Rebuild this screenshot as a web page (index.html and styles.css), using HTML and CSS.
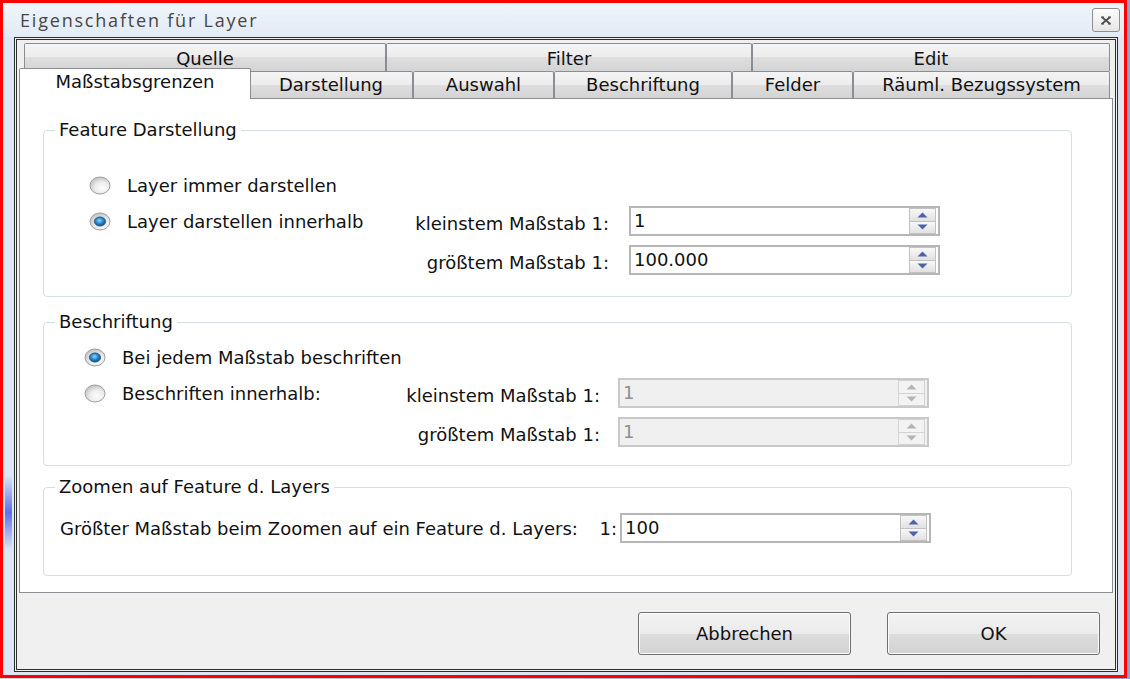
FILE: index.html
```html
<!DOCTYPE html>
<html lang="de">
<head>
<meta charset="utf-8">
<title>Eigenschaften für Layer</title>
<link rel="stylesheet" href="styles.css">
</head>
<body>
<svg class="defs" width="0" height="0" aria-hidden="true">
  <defs>
    <radialGradient id="rbFill" cx="0.6" cy="0.65" r="0.6">
      <stop offset="0" stop-color="#fdfdfd"/>
      <stop offset="0.6" stop-color="#ececec"/>
      <stop offset="1" stop-color="#c9c9c9"/>
    </radialGradient>
    <radialGradient id="rbDot" cx="0.45" cy="0.4" r="0.65">
      <stop offset="0" stop-color="#8fd6fb"/>
      <stop offset="0.45" stop-color="#2f8fd0"/>
      <stop offset="1" stop-color="#0f3f73"/>
    </radialGradient>
  </defs>
</svg>
<div class="window">
  <div class="titlebar">
    <span class="title">Eigenschaften für Layer</span>
    <button class="close" aria-label="Schließen">
      <svg width="12" height="9" viewBox="0 0 12 9"><path d="M2 1.2 L10 7.8 M10 1.2 L2 7.8" stroke="#505050" stroke-width="1.8" fill="none"/><path d="M1 1.2h3M8 1.2h3M1 7.8h3M8 7.8h3" stroke="#505050" stroke-width="1.2"/></svg>
    </button>
  </div>
  <div class="client">
    <div class="tabctl">
      <div class="tabrow back">
        <div class="tab w-quelle">Quelle</div>
        <div class="tab w-filter">Filter</div>
        <div class="tab w-edit">Edit</div>
      </div>
      <div class="tabrow front">
        <div class="tab active w-mass">Maßstabsgrenzen</div>
        <div class="tab w-dar">Darstellung</div>
        <div class="tab w-aus">Auswahl</div>
        <div class="tab w-bes">Beschriftung</div>
        <div class="tab w-fel">Felder</div>
        <div class="tab w-rau">Räuml. Bezugssystem</div>
      </div>
      <div class="panel">
        <fieldset class="group g1">
          <legend>Feature Darstellung</legend>
          <div class="grid grid1">
            <label class="radio span-all">
              <svg class="rb" width="22" height="19" viewBox="0 0 22 19"><ellipse cx="11" cy="9.5" rx="10" ry="8.5" fill="url(#rbFill)" stroke="#9d9d9d"/></svg>
              <span>Layer immer darstellen</span>
            </label>
            <label class="radio">
              <svg class="rb" width="22" height="19" viewBox="0 0 22 19"><ellipse cx="11" cy="9.5" rx="10" ry="8.5" fill="url(#rbFill)" stroke="#9d9d9d"/><ellipse cx="11" cy="9.5" rx="5.6" ry="4.6" fill="url(#rbDot)" stroke="#1d4f86" stroke-width="0.8"/></svg>
              <span>Layer darstellen innerhalb</span>
            </label>
            <span class="lbl">kleinstem Maßstab 1:</span>
            <div class="spin"><span class="val">1</span><span class="btns"><i><svg width="11" height="6" viewBox="0 0 11 6"><path d="M5.5 0.5 L10.5 5.5 H0.5Z"/></svg></i><i><svg width="11" height="6" viewBox="0 0 11 6"><path d="M0.5 0.5 H10.5 L5.5 5.5Z"/></svg></i></span></div>
            <span class="lbl c2">größtem Maßstab 1:</span>
            <div class="spin"><span class="val">100.000</span><span class="btns"><i><svg width="11" height="6" viewBox="0 0 11 6"><path d="M5.5 0.5 L10.5 5.5 H0.5Z"/></svg></i><i><svg width="11" height="6" viewBox="0 0 11 6"><path d="M0.5 0.5 H10.5 L5.5 5.5Z"/></svg></i></span></div>
          </div>
        </fieldset>

        <fieldset class="group g2">
          <legend>Beschriftung</legend>
          <div class="grid grid2">
            <label class="radio span-all">
              <svg class="rb" width="22" height="19" viewBox="0 0 22 19"><ellipse cx="11" cy="9.5" rx="10" ry="8.5" fill="url(#rbFill)" stroke="#9d9d9d"/><ellipse cx="11" cy="9.5" rx="5.6" ry="4.6" fill="url(#rbDot)" stroke="#1d4f86" stroke-width="0.8"/></svg>
              <span>Bei jedem Maßstab beschriften</span>
            </label>
            <label class="radio">
              <svg class="rb" width="22" height="19" viewBox="0 0 22 19"><ellipse cx="11" cy="9.5" rx="10" ry="8.5" fill="url(#rbFill)" stroke="#9d9d9d"/></svg>
              <span>Beschriften innerhalb:</span>
            </label>
            <span class="lbl">kleinstem Maßstab 1:</span>
            <div class="spin disabled"><span class="val">1</span><span class="btns"><i><svg width="11" height="6" viewBox="0 0 11 6"><path d="M5.5 0.5 L10.5 5.5 H0.5Z"/></svg></i><i><svg width="11" height="6" viewBox="0 0 11 6"><path d="M0.5 0.5 H10.5 L5.5 5.5Z"/></svg></i></span></div>
            <span class="lbl c2">größtem Maßstab 1:</span>
            <div class="spin disabled"><span class="val">1</span><span class="btns"><i><svg width="11" height="6" viewBox="0 0 11 6"><path d="M5.5 0.5 L10.5 5.5 H0.5Z"/></svg></i><i><svg width="11" height="6" viewBox="0 0 11 6"><path d="M0.5 0.5 H10.5 L5.5 5.5Z"/></svg></i></span></div>
          </div>
        </fieldset>

        <fieldset class="group g3">
          <legend>Zoomen auf Feature d. Layers</legend>
          <div class="grid grid3">
            <span class="lbl-left">Größter Maßstab beim Zoomen auf ein Feature d. Layers:</span>
            <span class="ratio">1:</span>
            <div class="spin"><span class="val">100</span><span class="btns"><i><svg width="11" height="6" viewBox="0 0 11 6"><path d="M5.5 0.5 L10.5 5.5 H0.5Z"/></svg></i><i><svg width="11" height="6" viewBox="0 0 11 6"><path d="M0.5 0.5 H10.5 L5.5 5.5Z"/></svg></i></span></div>
          </div>
        </fieldset>
      </div>
    </div>
    <div class="actions">
      <button class="btn">Abbrechen</button>
      <button class="btn">OK</button>
    </div>
  </div>
</div>
</body>
</html>
```

FILE: styles.css
```css
* { box-sizing: border-box; }
html, body { margin: 0; padding: 0; }
body {
  width: 1130px;
  height: 679px;
  overflow: hidden;
  background: linear-gradient(90deg, #c9d5e8, #8fa3d8);
  font-family: "DejaVu Sans", sans-serif;
  font-size: 18px;
  color: #111;
}
.defs { position: absolute; width: 0; height: 0; }

.window {
  width: 1127px;
  height: 678px;
  border: 3px solid #ff0000;
  background-color: #dde7f3;
  background-image: linear-gradient(to bottom, rgba(70, 90, 235, 0), rgba(70, 90, 235, 0.85) 50%, rgba(70, 90, 235, 0));
  background-repeat: no-repeat;
  background-position: 2px 472px;
  background-size: 7px 75px;
  display: flex;
  flex-direction: column;
}

.titlebar {
  height: 34px;
  flex: none;
  display: flex;
  justify-content: space-between;
  align-items: flex-start;
  padding-left: 17px;
  background: linear-gradient(to bottom, #f0f5fb, #e2eaf5);
}
.title {
  font-family: "Open Sans", "DejaVu Sans", sans-serif;
  font-size: 18px;
  letter-spacing: 1.8px;
  line-height: 34px;
  color: #464646;
}
.close {
  width: 28px;
  height: 24px;
  margin: 5px 4px 0 0;
  padding: 0;
  border: 1px solid #8e8e8e;
  border-radius: 3px;
  background: linear-gradient(to bottom, #fdfdfd, #e6e6e6);
  display: flex;
  align-items: center;
  justify-content: center;
}

.client {
  flex: 1;
  margin: 0 6px 3px 11px;
  border: 3px double #2e2e2e;
  background: #f0f0f0;
  display: flex;
  flex-direction: column;
}

.tabctl { padding-top: 3px; }
.tabrow { display: flex; }
.tabrow.back { height: 28px; margin-left: 7px; }
.tabrow.front { height: 27px; margin-left: 4px; position: relative; z-index: 1; }

.tab {
  flex: none;
  border: 1px solid #8b8d94;
  border-bottom: none;
  border-radius: 2px 2px 0 0;
  background: linear-gradient(to bottom, #f4f4f4, #ececec 50%, #dedede 50%, #d4d4d4);
  text-align: center;
  white-space: nowrap;
}
.back .tab { padding-top: 2px; line-height: 25px; }
.front .tab { line-height: 26px; }
.tab.active {
  position: relative;
  z-index: 2;
  height: 31px;
  margin: -3px -2px 0 -2px;
  background: #fff;
}

.w-quelle { width: 362px; }
.w-filter { width: 366px; }
.w-edit { width: 358px; }
.w-mass { width: 232px; }
.w-dar { width: 164px; }
.w-aus { width: 141px; }
.w-bes { width: 178px; }
.w-fel { width: 121px; }
.w-rau { width: 257px; }

.panel {
  height: 495px;
  margin: 0 2px;
  border: 1px solid #8b8d94;
  background: #fff;
  padding: 21px 0 0 23px;
}

.group {
  width: 1029px;
  margin: 0;
  padding: 0;
  border: 1px solid #d5dfe6;
  border-radius: 4px;
  min-width: 0;
}
.group legend {
  margin-left: 11px;
  padding: 0 4px;
  line-height: 20px;
  font-size: 18px;
}
.g2 { margin-top: 15px; }
.g3 { margin-top: 11px; }

.grid { display: grid; align-items: center; line-height: 21px; }
.grid1 {
  grid-template-columns: 300px 240px 311px;
  grid-template-rows: 24px 30px 30px;
  row-gap: 9px;
  padding: 33px 0 21px 45px;
}
.grid2 {
  grid-template-columns: 296px 238px 311px;
  grid-template-rows: 24px 30px 30px;
  row-gap: 9px;
  padding: 13px 0 18px 40px;
}
.grid3 {
  grid-template-columns: 520px 37px 314px;
  grid-template-rows: 30px;
  padding: 16px 0 32px 16px;
}
.grid3 .spin { margin-left: 3px; }

.span-all { grid-column: 1 / -1; }
.c2 { grid-column: 2; }

.radio { display: flex; align-items: center; gap: 16px; }
.rb { flex: none; display: block; }

.lbl { text-align: right; padding-right: 20px; padding-top: 4px; }
.grid2 .lbl { padding-right: 18px; }
.ratio { text-align: right; }

.spin {
  width: 311px;
  height: 30px;
  border: 2px solid #b6b6b6;
  background: #fff;
  display: flex;
}
.spin .val { flex: 1; padding-left: 3px; line-height: 26px; }
.spin .btns {
  width: 27px;
  margin-right: 2px;
  display: flex;
  flex-direction: column;
}
.spin .btns i {
  flex: 1;
  border: 1px solid #c2c2c2;
  background: linear-gradient(to bottom, #f8f8f8, #e1e1e1);
  display: flex;
  align-items: center;
  justify-content: center;
}
.spin .btns i + i { border-top: none; }
.spin svg { display: block; fill: #4d62a8; }

.spin.disabled { background: #f0f0f0; border-color: #c9c9c9; }
.spin.disabled .val { color: #8f8f8f; }
.spin.disabled .btns i { background: #f3f3f3; border-color: #d3d3d3; }
.spin.disabled svg { fill: #b4b4b4; }

.actions {
  flex: 1;
  display: flex;
  justify-content: flex-end;
  align-items: flex-start;
  gap: 36px;
  padding: 19px 15px 0 0;
}
.btn {
  width: 213px;
  height: 43px;
  border: 1px solid #707070;
  border-radius: 3px;
  background: linear-gradient(to bottom, #f3f3f3, #ebebeb 50%, #dddddd 50%, #d3d3d3);
  box-shadow: inset 0 0 0 1px #fbfbfb;
  font-family: "DejaVu Sans", sans-serif;
  font-size: 18px;
  color: #111;
  padding: 0;
}
```
